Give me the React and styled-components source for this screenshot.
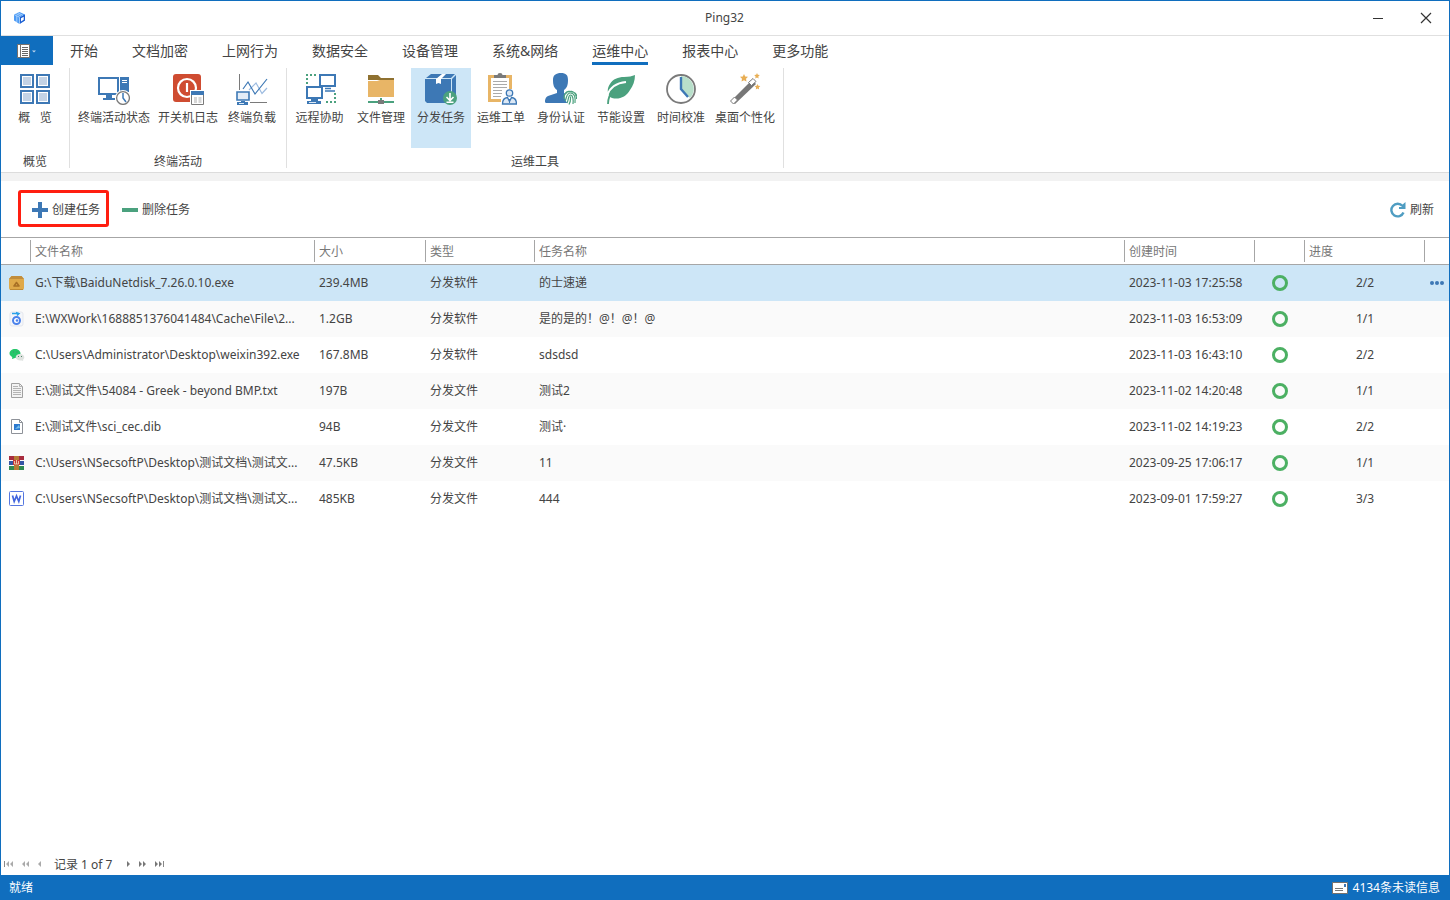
import { useState } from "react"
import styled, { createGlobalStyle } from "styled-components"

const blue = '#3d78b5'
const green = '#4ba17e'
const grey = '#7a7a7a'
const brand = '#106ebe'

const GlobalStyle = createGlobalStyle`
  * {
    box-sizing: border-box;
  }
  body {
    margin: 0;
    color: #444;
    background: #fff;
    font-family: "Noto Sans", "Noto Sans CJK SC", sans-serif;
    font-size: 12px;
    line-height: 16px;
  }
  button {
    border: 0;
    padding: 0;
    background: none;
    color: inherit;
    font: inherit;
    cursor: pointer;
  }
  svg {
    display: block;
    flex: none;
  }
`

const Window = styled.div`
  min-height: 100vh;
  display: flex;
  flex-direction: column;
  border: 1px solid ${brand};
`

const TitleBar = styled.header`
  height: 35px;
  display: grid;
  grid-template-columns: 1fr auto 1fr;
  align-items: center;
  padding: 0 13px 0 12px;
  border-bottom: 1px solid #e0e0e0;
`
const AppTitle = styled.h1`
  margin: 0;
  font-size: 12px;
  font-weight: 400;
`
const WindowControls = styled.div`
  display: flex;
  justify-content: flex-end;
  gap: 28px;
`
const ControlButton = styled.button`
  width: 20px;
  height: 20px;
  display: flex;
  align-items: center;
  justify-content: center;
`

const MenuBar = styled.nav`
  display: flex;
  height: 29px;
`
const FileButton = styled.button`
  width: 52px;
  display: flex;
  align-items: center;
  justify-content: center;
  background: ${brand};
`
const MenuTabs = styled.div`
  display: flex;
  gap: 34px;
  padding-left: 17px;
`
const MenuTab = styled.button`
  padding-top: 4px;
  font-size: 14px;
  line-height: 22px;
  white-space: nowrap;
  border-bottom: 3px solid ${({ $active }) => ($active ? brand : 'transparent')};
`

const Ribbon = styled.section`
  display: flex;
  padding: 3px 0 4px;
  border-bottom: 1px solid #dcdcdc;
`
const RibbonGroup = styled.div`
  display: flex;
  flex-direction: column;
  height: 100px;
  padding: 0 4px;
  border-right: 1px solid #e0e0e0;
`
const RibbonItems = styled.div`
  display: flex;
`
const RibbonButton = styled.button`
  min-width: 60px;
  height: 80px;
  display: flex;
  flex-direction: column;
  align-items: center;
  gap: 5px;
  padding: 5px 4px 0;
  white-space: pre;
  background: ${({ $active }) => ($active ? '#cde6f7' : 'transparent')};
`
const GroupTitle = styled.div`
  padding-top: 6px;
  text-align: center;
`
const Band = styled.div`
  height: 8px;
  background: #f2f2f2;
`

const Toolbar = styled.div`
  height: 56px;
  display: flex;
  align-items: center;
  gap: 13px;
  padding: 0 15px 2px 17px;
`
const ToolButton = styled.button`
  display: flex;
  align-items: center;
  gap: 4px;
  padding-top: 3px;
  &:last-child {
    margin-left: auto;
  }
`
const MarkedButton = styled(ToolButton)`
  height: 37px;
  padding: 3px 6px 0 11px;
  border: 3px solid #ff1e10;
  border-radius: 3px;
`

const TaskTable = styled.table`
  width: 100%;
  table-layout: fixed;
  border-spacing: 0;
`
const Col = styled.col`
  width: ${({ $width }) => ($width ? `${$width}px` : 'auto')};
`
const HeadCell = styled.th`
  padding: 2px 0;
  border-top: 1px solid #a6a6a6;
  border-bottom: 1px solid #a6a6a6;
  color: #777;
  font-weight: 400;
  text-align: left;
`
const HeadLabel = styled.span`
  display: block;
  height: 22px;
  padding-left: 4px;
  line-height: 24px;
  border-right: 1px solid ${({ $last }) => ($last ? 'transparent' : '#a6a6a6')};
`
const Row = styled.tr`
  height: 36px;
  background: ${({ $selected }) => ($selected ? '#cde6f7' : '#fff')};
  &:nth-child(2n) {
    background: #fafafa;
  }
`
const Cell = styled.td`
  padding: 0 0 0 4px;
  white-space: nowrap;
`
const IconCell = styled(Cell)`
  padding-left: 8px;
`
const CenterCell = styled(Cell)`
  padding: 0;
  text-align: center;
`
const StatusRing = styled.span`
  display: block;
  width: 16px;
  height: 16px;
  margin: 0 auto;
  border: 3px solid #4cb063;
  border-radius: 50%;
`
const MoreButton = styled.button`
  display: block;
`

const Pager = styled.div`
  display: flex;
  align-items: center;
  gap: 8px;
  height: 22px;
  margin-top: auto;
  padding-left: 2px;
`
const PagerText = styled.span`
  padding: 2px 6px 0 3px;
`
const StatusBar = styled.footer`
  height: 24px;
  display: flex;
  align-items: center;
  justify-content: space-between;
  padding: 2px 9px 0 8px;
  color: #fff;
  background: ${brand};
`
const Unread = styled.span`
  display: flex;
  align-items: center;
  gap: 5px;
`

const Logo = () => (
  <svg width="13" height="14" viewBox="0 0 13 14">
    <path d="M6.500 1 12 3.500v6L6.500 13 1 9.500v-6z" fill="#4d9bf5" />
    <path d="M6.500 6.200 12 3.500v6L6.500 13z" fill="#1f5fd0" />
    <path d="M8 7.200l2.700-1.400v3L8 10.400z" fill="#fff" />
    <path d="M1 3.500l5.500 2.700V13M3 2.600l5.300 2.600M4.800 1.800l5.200 2.600M3.800 5v6" fill="none" stroke="#b9dafd" strokeWidth=".8" />
  </svg>
)

const FileMenuIcon = () => (
  <svg width="20" height="16" viewBox="0 0 20 16">
    <path d="M.500 1.500h12v13h-12z" fill="#fff" stroke="#77716c" />
    <path d="M3.500 2v12" stroke="#77716c" />
    <path d="M5 4.500h6M5 6.500h6M5 8.500h6M5 10.500h6M5 12.500h6" stroke="#666" />
    <path d="M15 7.500h4l-2 2z" fill="#bcd4ec" />
  </svg>
)

const RibbonSvg = ({ children }) => (
  <svg width="32" height="32" viewBox="0 0 32 32" fill="none">{children}</svg>
)

const Squares = () => (
  <RibbonSvg>
    {[[1, 1], [17, 1], [1, 17], [17, 17]].map(([x, y]) => (
      <g key={`${x}-${y}`}>
        <rect x={x + 1} y={y + 1} width="12" height="12" stroke={blue} strokeWidth="2" />
        <rect x={x + 3} y={y + 3} width="8" height="8" fill="#c3d3e6" />
      </g>
    ))}
  </RibbonSvg>
)

const TerminalStatus = () => (
  <RibbonSvg>
    <path d="M1 5h19v16H1z" stroke={blue} strokeWidth="2" />
    <path d="M8 22h6v3h3v2H5v-2h3zM22 4h9v15h-9z" fill={blue} />
    <path d="M24 7.500h5M24 9.500h5" stroke="#fff" />
    <circle cx="25" cy="25" r="8" fill="#fff" />
    <circle cx="25" cy="25" r="6.400" stroke={grey} strokeWidth="1.300" fill="#fff" />
    <path d="M25 20v5l3 4" stroke={blue} strokeWidth="1.500" />
  </RibbonSvg>
)

const PowerLog = () => (
  <RibbonSvg>
    <rect x="1" y="1" width="28" height="28" rx="3" fill="#cf4c31" />
    <circle cx="15" cy="15" r="9" stroke="#fff" strokeWidth="2.200" />
    <path d="M15 10v9" stroke="#fff" strokeWidth="2.200" />
    <path d="M18 17h14v15H18z" fill="#fff" />
    <path d="M19.500 18.500h12v13h-12z" stroke={grey} />
    <path d="M19 18h13v4H19z" fill={blue} />
    <path d="M22 24h3v6h-3zM26.500 24h3v6h-3z" fill="#d6d6d6" />
  </RibbonSvg>
)

const TerminalLoad = () => (
  <RibbonSvg>
    <path d="M3.500 1v16M14 29.500h17" stroke={grey} />
    <path d="M13 17l7-7 6 10.500 5-5.500" stroke="#9cbbe0" strokeWidth="1.200" />
    <path d="M7 16l5-7 7 12L31 6" stroke={blue} strokeWidth="1.200" />
    <path d="M1 19h12v8H1z" fill="#e4edf7" stroke={blue} strokeWidth="1.600" />
    <path d="M5 28h4v1h3v3H1v-3h4z" fill={blue} />
    <path d="M3 30.500h5" stroke="#dbe8f5" />
  </RibbonSvg>
)

const RemoteHelp = () => (
  <RibbonSvg>
    <path d="M2 11V2h11M30 20v9H19" stroke={green} strokeWidth="2" strokeDasharray="2 2" />
    <path d="M15 2h15v11H15z" fill="#fff" stroke={blue} strokeWidth="2" />
    <path d="M20 15.500h6M20 18h10" stroke={blue} strokeWidth="1.500" />
    <path d="M2 14h15v11H2z" fill="#fff" stroke={blue} strokeWidth="2" />
    <path d="M6 26h7v2h3v3H2v-3h4z" fill={blue} />
    <path d="M4 29.500h7" stroke="#dbe8f5" />
  </RibbonSvg>
)

const FolderNet = () => (
  <RibbonSvg>
    <path d="M3 2h10l3 3h13v2H3z" fill="#8f7130" />
    <path d="M3 8h9l3-1h14v17H3z" fill="#e8b566" />
    <path d="M3 29h26M16 25v3" stroke={green} strokeWidth="2" />
    <path d="M13 27h6v4h-6z" fill={grey} />
  </RibbonSvg>
)

const PackageTask = () => (
  <RibbonSvg>
    <path d="M0 6h26v24H2l-2-2zM1 5l5-4h24l-4 4zM27 6l4-4v22l-4 4z" fill={blue} />
    <path d="M17 1h4l-5 5v5l-2.500-1-2.500 1V6z" fill="#fff" />
    <circle cx="25" cy="25" r="7" fill={green} />
    <path d="M25 20v7M21.500 24l3.500 3.500 3.500-3.500M21.500 29.200h7" stroke="#fff" strokeWidth="1.600" />
  </RibbonSvg>
)

const WorkOrder = () => (
  <RibbonSvg>
    <path d="M4.500 3.500h21v24h-21z" fill="#fff" stroke="#e8b566" strokeWidth="3" />
    <path d="M9 2h3.500q0-2 2.500-2t2.500 2H21v3H9z" fill={grey} />
    <path d="M8 8.500h14M8 11.500h14M8 14.500h14M8 17.500h9M8 20.500h9M8 23.500h8" stroke="#aaa" />
    <path d="M16 32V23l5-7h7v5l4 3v8z" fill="#fff" />
    <circle cx="24.500" cy="20" r="3.200" fill="#dce8f5" stroke={blue} strokeWidth="1.300" />
    <path d="M22.500 24.500Q17.500 25 17.500 31h14q0-6-5-6.500l-2 4z" fill="#dce8f5" stroke={blue} strokeWidth="1.300" />
    <path d="M24.500 26v4" stroke={blue} />
  </RibbonSvg>
)

const Identity = () => (
  <RibbonSvg>
    <path d="M16 0c5 0 7 2 7 7 0 5-1 8-4 10v3l7 3v7H1C-1 30 0 24 3 23l9-3v-3C9 15 8 12 8 7c0-5 3-7 8-7z" fill={blue} />
    <circle cx="27" cy="24" r="7.500" fill="#fff" />
    <g stroke={green} strokeWidth="1.200">
      <path d="M19 23a7 7 0 0 1 13 0M19 26c0-7 3-8 6.500-8s6.500 4 6 9" strokeDasharray="5 1" />
      <path d="M20 28c2-3 1-8 5.500-8s5 5 4.500 10M22 30c2-4 1-8 3.500-8s3 5 2.500 9M24 31.500c2-3 1.500-5 1.500-8" />
    </g>
  </RibbonSvg>
)

const Leaf = () => (
  <RibbonSvg>
    <path d="M30 2c0 6-2 11-5 15-4 7-11 10-18 8l-2-1c-3-4-3-9 0-13 3-5 8-7 14-7 5 0 8-1 11-2z" fill={green} />
    <path d="M21 9C12 10 5 14 2.500 22" stroke="#fff" strokeWidth="1.800" />
    <path d="M3 31c0-6 1-9 5-13" stroke={green} strokeWidth="1.800" />
  </RibbonSvg>
)

const TimeCheck = () => (
  <RibbonSvg>
    <circle cx="16" cy="16" r="14" fill="#fff" stroke={grey} strokeWidth="1.800" />
    <path d="M16 3a13 13 0 0 1 9 22l-9-9z" fill="#b8dfca" />
    <path d="M16 4v12l7 8" stroke={blue} strokeWidth="2.400" />
  </RibbonSvg>
)

const Wand = () => (
  <RibbonSvg>
    <path d="M2 28L23 7l4 4L6 31z" fill="#777" />
    <path d="M1.500 28l4-4 3 3-4 4zM19.500 9.500L24 5.500l3 3-4.500 4z" fill="#fff" stroke={grey} />
    <path d="M15 1l1.200 2.500 2.800.3-2 2 .5 2.800-2.500-1.300-2.500 1.300.500-2.800-2-2 2.800-.3zM28 0l.8 1.800 2 .3-1.500 1.400.3 2L28 4.500l-1.700 1 .3-2L25.200 2.100l2-.3zM28.500 11l.8 1.800 2 .3-1.500 1.400.3 2-1.600-1-1.700 1 .3-2-1.400-1.400 2-.3z" fill="#e8ae54" />
  </RibbonSvg>
)

const FileSvg = ({ children }) => (
  <svg width="16" height="16" viewBox="0 0 16 16" fill="none">{children}</svg>
)

const fileIcons = {
  box: (
    <FileSvg>
      <path d="M2.500 1h10L15 4v9q0 2-2 2H2q-2 0-2-2V4z" fill="#dfa949" />
      <path d="M2.500 1h10L15 4H0z" fill="#c18d3c" />
      <path d="M1 14.500h13" stroke="#bf8a34" />
      <path d="M7.500 7.500L5 11h5z" stroke="#a86f25" strokeWidth="1.600" strokeLinejoin="round" />
    </FileSvg>
  ),
  setup: (
    <FileSvg>
      <rect x="1" y="1" width="13" height="14" rx="2" fill="#f4f6fa" stroke="#e4e7ed" />
      <path d="M3 2.500h7M7 1.500l3 1-2 2" stroke="#2aa1e8" strokeWidth="1.500" />
      <circle cx="7.500" cy="9.500" r="3.500" fill="#fff" stroke="#4b82eb" strokeWidth="2" />
      <circle cx="8" cy="9.500" r="1.300" fill="#4b82eb" />
    </FileSvg>
  ),
  wechat: (
    <FileSvg>
      <path d="M6 2c3 0 5.500 2 5.500 4.300S9 11 6 11l-3 1 .3-2C1.500 9 .500 8 .500 6.300.500 4 3 2 6 2z" fill="#25c76a" />
      <path d="M11 7c2.500 0 4.300 1.500 4.300 3.300 0 1-.5 1.800-1.300 2.400l.2 1.300-1.500-.6c-3.300.4-6-1-6-3.100C6.700 8.500 8.500 7 11 7z" fill="#dfe3e0" />
      <path d="M4 5h1M7.500 5h1M9 9.500h1M12 9.500h1" stroke="#51836a" />
    </FileSvg>
  ),
  text: (
    <FileSvg>
      <path d="M2.500.500h8l3 3v11h-11z" fill="#f3f3f3" stroke="#a0a0a0" />
      <path d="M10.500.500v3h3M4 3.500h5M4 5.500h8M4 7.500h8M4 9.500h8M4 11.500h8" stroke="#b4b4b4" />
    </FileSvg>
  ),
  image: (
    <FileSvg>
      <path d="M2.500.500h8l3 3v11h-11z" fill="#fff" stroke="#8e9299" />
      <path d="M10.500.500v3h3" stroke="#8e9299" />
      <path d="M5 5h6v6H5z" fill="#2c79cf" />
      <path d="M6 10l4-4 1 3z" fill="#75c0ee" />
    </FileSvg>
  ),
  rar: (
    <FileSvg>
      <path d="M0 1h15v4H0z" fill="#a82c3e" />
      <path d="M0 6h15v4H0z" fill="#3455a5" />
      <path d="M0 11h15v4H0z" fill="#2f8a50" />
      <path d="M5 1h5v14H5z" fill="#b67b35" />
      <path d="M4 5h7v5H4z" fill="#c53c38" />
      <path d="M5.500 6v3h4V6M7.500 5v4" stroke="#f6e3c0" strokeWidth=".8" />
    </FileSvg>
  ),
  word: (
    <FileSvg>
      <rect x=".500" y=".500" width="14" height="14" rx="1" fill="#fff" stroke="#5577e0" />
      <path d="M3.500 4.500l1.700 6 2.300-5.500 2.300 5.500 1.700-6" stroke="#4265dd" strokeWidth="1.700" />
    </FileSvg>
  )
}

const Triangle = ({ kind }) => {
  const shapes = {
    first: [10, 'M1.500 1v6', 'M6 1v6L3 4zM10 1v6L7 4z'],
    prevPage: [8, '', 'M4 1v6L1 4zM8 1v6L5 4z'],
    prev: [6, '', 'M4 1v6L1 4z'],
    next: [5, '', 'M1 1v6l3-3z'],
    nextPage: [8, '', 'M0 1v6l3-3zM4 1v6l3-3z'],
    last: [10, 'M8.500 1v6', 'M0 1v6l3-3zM4 1v6l3-3z']
  }
  const [width, bar, arrows] = shapes[kind]
  return (
    <svg width={width} height="8" viewBox={`0 0 ${width} 8`}>
      {bar && <path d={bar} stroke="#888" />}
      <path d={arrows} fill={kind.startsWith('next') || kind === 'last' ? '#777' : '#aaa'} />
    </svg>
  )
}

const menuTabs = ['开始', '文档加密', '上网行为', '数据安全', '设备管理', '系统&网络', '运维中心', '报表中心', '更多功能']

const ribbonGroups = [
  { title: '概览', items: [['概   览', Squares]] },
  {
    title: '终端活动',
    items: [['终端活动状态', TerminalStatus], ['开关机日志', PowerLog], ['终端负载', TerminalLoad]]
  },
  {
    title: '运维工具',
    items: [
      ['远程协助 ', RemoteHelp],
      ['文件管理', FolderNet],
      ['分发任务', PackageTask],
      ['运维工单', WorkOrder],
      ['身份认证', Identity],
      ['节能设置', Leaf],
      ['时间校准', TimeCheck],
      ['桌面个性化', Wand]
    ]
  }
]

const columns = [
  ['', 30],
  ['文件名称', 284],
  ['大小', 111],
  ['类型', 109],
  ['任务名称', 0],
  ['创建时间', 130],
  ['', 50],
  ['进度', 120],
  ['', 24]
]

const tasks = [
  ['box', 'G:\\下载\\BaiduNetdisk_7.26.0.10.exe', '239.4MB', '分发软件', '的士速递', '2023-11-03 17:25:58', '2/2'],
  ['setup', 'E:\\WXWork\\1688851376041484\\Cache\\File\\2...', '1.2GB', '分发软件', '是的是的！@！@！@', '2023-11-03 16:53:09', '1/1'],
  ['wechat', 'C:\\Users\\Administrator\\Desktop\\weixin392.exe', '167.8MB', '分发软件', 'sdsdsd', '2023-11-03 16:43:10', '2/2'],
  ['text', 'E:\\测试文件\\54084 - Greek - beyond BMP.txt', '197B', '分发文件', '测试2', '2023-11-02 14:20:48', '1/1'],
  ['image', 'E:\\测试文件\\sci_cec.dib', '94B', '分发文件', '测试·', '2023-11-02 14:19:23', '2/2'],
  ['rar', 'C:\\Users\\NSecsoftP\\Desktop\\测试文档\\测试文...', '47.5KB', '分发文件', '11', '2023-09-25 17:06:17', '1/1'],
  ['word', 'C:\\Users\\NSecsoftP\\Desktop\\测试文档\\测试文...', '485KB', '分发文件', '444', '2023-09-01 17:59:27', '3/3']
]

const App = () => {
  const [activeTab, setActiveTab] = useState('运维中心')
  const [activeTool, setActiveTool] = useState('分发任务')
  const [selected, setSelected] = useState(0)

  return (
    <>
      <GlobalStyle />
      <Window>
        <TitleBar>
          <Logo />
          <AppTitle>Ping32</AppTitle>
          <WindowControls>
            <ControlButton aria-label="最小化">
              <svg width="12" height="12" viewBox="0 0 12 12"><path d="M1 6.500h10" stroke="#333" /></svg>
            </ControlButton>
            <ControlButton aria-label="关闭">
              <svg width="12" height="12" viewBox="0 0 12 12"><path d="M1 1l10 10M11 1L1 11" stroke="#333" strokeWidth="1.200" /></svg>
            </ControlButton>
          </WindowControls>
        </TitleBar>

        <MenuBar>
          <FileButton aria-label="文件"><FileMenuIcon /></FileButton>
          <MenuTabs>
            {menuTabs.map((tab) => (
              <MenuTab key={tab} $active={tab === activeTab} onClick={() => setActiveTab(tab)}>{tab}</MenuTab>
            ))}
          </MenuTabs>
        </MenuBar>

        <Ribbon>
          {ribbonGroups.map((group) => (
            <RibbonGroup key={group.title}>
              <RibbonItems>
                {group.items.map(([label, Icon]) => (
                  <RibbonButton key={label} $active={label === activeTool} onClick={() => setActiveTool(label)}>
                    <Icon />
                    {label}
                  </RibbonButton>
                ))}
              </RibbonItems>
              <GroupTitle>{group.title}</GroupTitle>
            </RibbonGroup>
          ))}
        </Ribbon>
        <Band />

        <Toolbar>
          <MarkedButton>
            <svg width="16" height="16" viewBox="0 0 16 16"><path d="M8 0v16M0 8h16" stroke={blue} strokeWidth="4" /></svg>
            创建任务
          </MarkedButton>
          <ToolButton>
            <svg width="16" height="16" viewBox="0 0 16 16"><path d="M0 8h16" stroke={green} strokeWidth="4" /></svg>
            删除任务
          </ToolButton>
          <ToolButton>
            <svg width="16" height="16" viewBox="0 0 16 16" fill="none">
              <path d="M13.500 10.500A6.300 6.300 0 1 1 12.500 4" stroke="#4f9dc2" strokeWidth="2.400" />
              <path d="M15.500 0v7H9V5h3V3z" fill="#4f9dc2" />
            </svg>
            刷新
          </ToolButton>
        </Toolbar>

        <TaskTable>
          <colgroup>
            {columns.map(([, width], i) => <Col key={i} $width={width} />)}
          </colgroup>
          <thead>
            <tr>
              {columns.map(([label], i) => (
                <HeadCell key={i}>
                  <HeadLabel $last={i === columns.length - 1}>{label}</HeadLabel>
                </HeadCell>
              ))}
            </tr>
          </thead>
          <tbody>
            {tasks.map(([icon, file, size, type, name, time, progress], i) => (
              <Row key={time} $selected={i === selected} onClick={() => setSelected(i)}>
                <IconCell>{fileIcons[icon]}</IconCell>
                <Cell>{file}</Cell>
                <Cell>{size}</Cell>
                <Cell>{type}</Cell>
                <Cell>{name}</Cell>
                <Cell>{time}</Cell>
                <CenterCell><StatusRing /></CenterCell>
                <CenterCell>{progress}</CenterCell>
                <Cell>
                  {i === selected && (
                    <MoreButton aria-label="更多">
                      <svg width="16" height="4" viewBox="0 0 16 4" fill={blue}>
                        <circle cx="3" cy="2" r="2" />
                        <circle cx="8" cy="2" r="2" />
                        <circle cx="13" cy="2" r="2" />
                      </svg>
                    </MoreButton>
                  )}
                </Cell>
              </Row>
            ))}
          </tbody>
        </TaskTable>

        <Pager>
          <button aria-label="第一条"><Triangle kind="first" /></button>
          <button aria-label="上一页"><Triangle kind="prevPage" /></button>
          <button aria-label="上一条"><Triangle kind="prev" /></button>
          <PagerText>记录 1 of 7</PagerText>
          <button aria-label="下一条"><Triangle kind="next" /></button>
          <button aria-label="下一页"><Triangle kind="nextPage" /></button>
          <button aria-label="最后一条"><Triangle kind="last" /></button>
        </Pager>
        <StatusBar>
          <span>就绪</span>
          <Unread>
            <svg width="16" height="12" viewBox="0 0 16 12" fill="none">
              <path d="M.500.500h15v11H.500z" fill="#fff" stroke="#77716c" />
              <path d="M3 6.500h8M3 8.500h8" stroke="#777" />
              <path d="M12 2h2v3h-2z" fill={blue} />
            </svg>
            4134条未读信息
          </Unread>
        </StatusBar>
      </Window>
    </>
  )
}

export default App
